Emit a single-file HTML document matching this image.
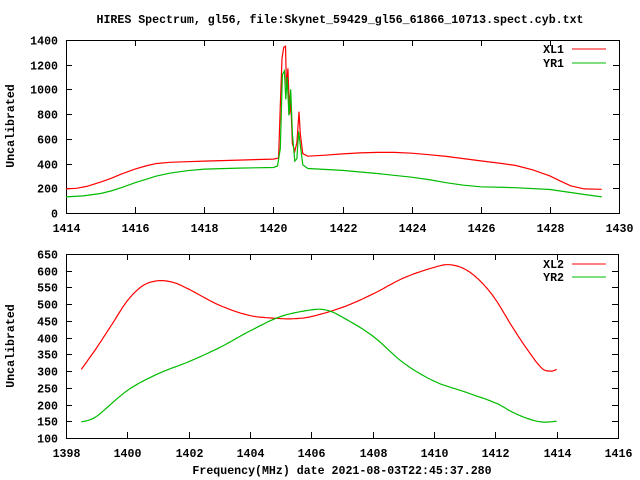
<!DOCTYPE html>
<html><head><style>
html,body{margin:0;padding:0;background:#fff;}
svg{display:block;}
text{font-family:"Liberation Mono",monospace;font-weight:bold;font-size:11.6px;fill:#000;}
</style></head><body>
<svg id="s" width="640" height="480" xmlns="http://www.w3.org/2000/svg">
<text x="340" y="23" text-anchor="middle">HIRES Spectrum, gl56, file:Skynet_59429_gl56_61866_10713.spect.cyb.txt</text>
<text transform="translate(14,126) rotate(-90)" text-anchor="middle">Uncalibrated</text>
<text transform="translate(14,346) rotate(-90)" text-anchor="middle">Uncalibrated</text>
<text x="342" y="474" text-anchor="middle">Frequency(MHz) date 2021-08-03T22:45:37.280</text>
<text x="564" y="53" text-anchor="end">XL1</text>
<text x="564" y="67" text-anchor="end">YR1</text>
<text x="564" y="268" text-anchor="end">XL2</text>
<text x="564" y="281" text-anchor="end">YR2</text>
<line x1="572" y1="49" x2="606" y2="49" stroke="#f00"/>
<line x1="572" y1="63" x2="606" y2="63" stroke="#0b0"/>
<line x1="572" y1="264" x2="606" y2="264" stroke="#f00"/>
<line x1="572" y1="277" x2="606" y2="277" stroke="#0b0"/>
<g id="g"></g>
</svg>
<script>
var g=document.getElementById('g'),h='';
function P(L,x0,x1,y0,y1,X0,X1,Y0,Y1){return function(x,y){return[(L+(x-X0)/(X1-X0)*(x1-x0)),(y0-(y-Y0)/(Y1-Y0)*(y0-y1))];};}
function cr(pts){var out=[];for(var i=0;i<pts.length-1;i++){var p0=pts[Math.max(i-1,0)],p1=pts[i],p2=pts[i+1],p3=pts[Math.min(i+2,pts.length-1)];
 for(var t=0;t<1;t+=0.1){var t2=t*t,t3=t2*t;out.push([0,1].map(function(k){return 0.5*((2*p1[k])+(-p0[k]+p2[k])*t+(2*p0[k]-5*p1[k]+4*p2[k]-p3[k])*t2+(-p0[k]+3*p1[k]-3*p2[k]+p3[k])*t3);}));}}
 out.push(pts[pts.length-1]);return out;}
function plot(L,R,T,B,X0,X1,xs,Y0,Y1,ys,series,smooth){
 var f=P(L,L,R,B,T,X0,X1,Y0,Y1);
 h+='<rect x="'+L+'.5" y="'+T+'.5" width="'+(R-L)+'" height="'+(B-T)+'" fill="none" stroke="#000"/>';
 for(var x=X0;x<=X1+1e-6;x+=xs){var p=f(x,Y0);var px=Math.round(p[0])+.5;
  h+='<line x1="'+px+'" y1="'+B+'" x2="'+px+'" y2="'+(B-6)+'" stroke="#000"/><line x1="'+px+'" y1="'+T+'" x2="'+px+'" y2="'+(T+6)+'" stroke="#000"/>';
  h+='<text x="'+px+'" y="'+(B+19)+'" text-anchor="middle">'+x+'</text>';}
 for(var y=Y0;y<=Y1+1e-6;y+=ys){var p=f(X0,y);var py=Math.round(p[1])+.5;
  h+='<line x1="'+L+'" y1="'+py+'" x2="'+(L+6)+'" y2="'+py+'" stroke="#000"/><line x1="'+R+'" y1="'+py+'" x2="'+(R-6)+'" y2="'+py+'" stroke="#000"/>';
  h+='<text x="'+(L-8)+'" y="'+(py+4)+'" text-anchor="end">'+y+'</text>';}
 series.forEach(function(s){var pts=[];for(var i=0;i<s[1].length;i+=2){pts.push(f(s[1][i],s[1][i+1]));}
  if(smooth)pts=cr(pts);
  h+='<polyline fill="none" stroke="'+s[0]+'" stroke-width="1.2" points="'+pts.map(function(p){return p[0].toFixed(1)+','+p[1].toFixed(1);}).join(' ')+'"/>';});
}
plot(66,619,40,213,1414,1430,2,0,1400,200,[
['#f00',[1414,195,1414.3,200,1414.6,215,1415,250,1415.3,280,1415.6,315,1416,355,1416.3,380,1416.6,400,1417,410,1417.5,415,1418,420,1419,428,1420,436,1420.15,445,1420.2,870,1420.25,1250,1420.3,1340,1420.35,1350,1420.38,1000,1420.42,1170,1420.47,800,1420.5,920,1420.55,560,1420.62,500,1420.68,570,1420.74,820,1420.78,640,1420.85,480,1421,460,1421.5,468,1422,478,1422.5,486,1423,490,1423.5,490,1424,484,1424.5,472,1425,458,1425.5,440,1426,422,1426.5,405,1427,385,1427.5,350,1428,300,1428.3,260,1428.6,220,1429,195,1429.5,192]],
['#0b0',[1414,130,1414.5,138,1415,158,1415.3,178,1415.6,205,1416,245,1416.3,272,1416.6,298,1417,322,1417.5,342,1418,355,1419,363,1420,368,1420.12,380,1420.2,520,1420.26,1120,1420.32,1150,1420.36,920,1420.4,1100,1420.45,790,1420.5,1000,1420.55,640,1420.62,420,1420.68,440,1420.73,660,1420.78,550,1420.85,390,1421,360,1422,345,1423,320,1424,290,1424.5,270,1425,245,1425.5,225,1426,212,1427,205,1428,190,1428.5,170,1429,150,1429.5,130]]
],false);
plot(66,618,254,438,1398,1416,2,100,650,50,[
['#f00',[1398.5,305,1399,370,1399.5,440,1400,510,1400.5,555,1401,570,1401.5,565,1402,545,1403,497,1404,466,1405,457,1405.5,457,1406,463,1407,490,1408,530,1409,578,1410,610,1410.5,618,1411,605,1411.5,570,1412,515,1412.5,440,1413,370,1413.5,310,1413.8,300,1414,305]],
['#0b0',[1398.5,148,1399,165,1400,242,1401,292,1402,328,1403,370,1404,420,1405,463,1406,483,1406.5,482,1407,462,1408,405,1409,325,1410,270,1411,238,1412,205,1412.5,180,1413,160,1413.5,148,1414,150]]
],true);
g.innerHTML=h;
</script>
</body></html>
